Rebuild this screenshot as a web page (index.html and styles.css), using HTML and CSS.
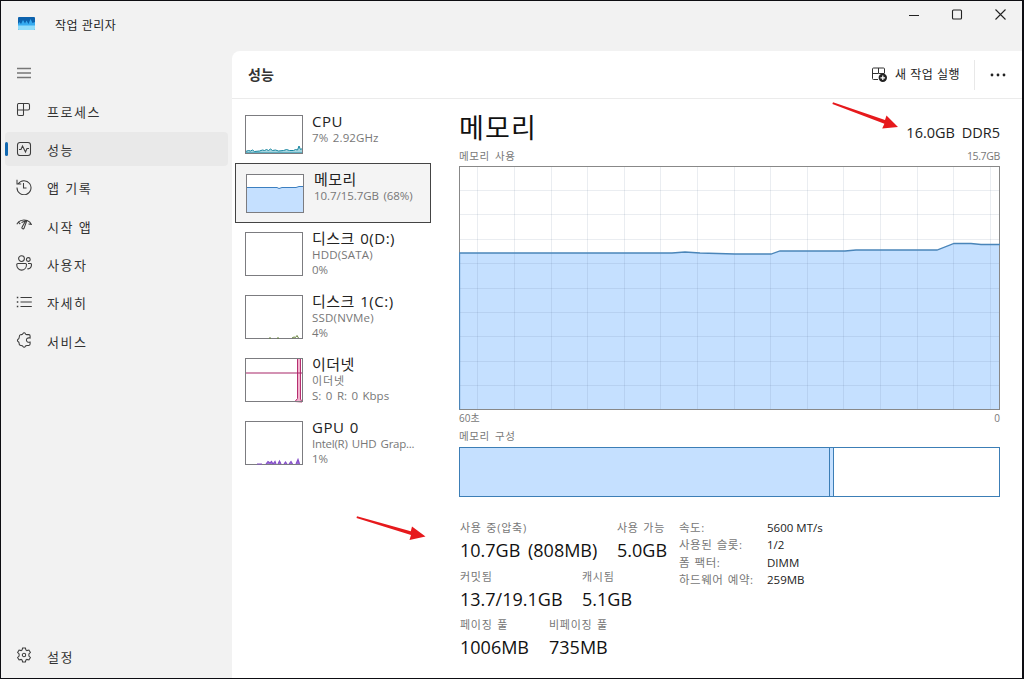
FILE: index.html
```html
<!DOCTYPE html>
<html lang="ko">
<head>
<meta charset="utf-8">
<title>작업 관리자</title>
<link rel="stylesheet" href="styles.css">
</head>
<body>
<div class="window">
  <header class="titlebar">
    <svg class="app-icon" width="17" height="14" viewBox="0 0 17 14"><rect width="17" height="13" rx="1" fill="#0c62ad"/><path d="M0 7l1.500-2 1.500 2 2-4 2 3.500 1.500-3 2 3.500 2-5 2 4 2.500-1v7H0z" fill="#35aaf0"/><path d="M0 8.500h17V12a1 1 0 0 1-1 1H1a1 1 0 0 1-1-1z" fill="#8fdcfb"/></svg>
    <span class="app-name">작업 관리자</span>
    <svg class="controls" width="110" height="28" viewBox="0 0 110 28" fill="none" stroke="#222" stroke-width="1.1"><path d="M9 14.500h10M95.500 8.500l10 10M105.500 8.500l-10 10"/><rect x="52.500" y="9" width="9" height="9" rx="1"/></svg>
  </header>
  <div class="body">
    <nav class="sidebar">
      <div class="nav-item menu"><svg viewBox="0 0 16 16"><path d="M1 3.500h14M1 8h14M1 12.500h14" stroke="#777" stroke-width="1.300"/></svg></div>
      <div class="nav-item"><svg viewBox="0 0 16 16"><path d="M2.500 1.500h9.500a1.500 1.500 0 0 1 1.500 1.500v3.500a1.500 1.500 0 0 1-1.500 1.500H1.500V3a1.500 1.500 0 0 1 1-1.500zM1.500 8v4a1.500 1.500 0 0 0 1.500 1.500h3.500a1 1 0 0 0 1-1V1.500"/></svg><span>프로세스</span></div>
      <div class="nav-item active"><svg viewBox="0 0 16 16"><rect x="1.500" y="1.500" width="13" height="13" rx="2.500"/><path d="M3 8.500h2l1.500-3.500 3 6 1.500-3.500h2"/></svg><span>성능</span></div>
      <div class="nav-item"><svg viewBox="0 0 16 16"><path d="M2.200 4.800A7 7 0 1 1 1 8.600M1 .8v4.200h4.200M7.500 4v5h3"/></svg><span>앱 기록</span></div>
      <div class="nav-item"><svg viewBox="0 0 16 16"><path d="M.8 7.300l1.500-2.100 2 1.800M2.300 5.200C5 2.300 10.500 2 13.800 5.200l1.500 2.100-2.800-.3M9.700 3.800L6 10.200c-.5 1.800 1.800 2.300 2.200.7L10.700 4M5.500 5.500l4-1.500"/></svg><span>시작 앱</span></div>
      <div class="nav-item"><svg viewBox="0 0 16 16"><circle cx="5.500" cy="3.600" r="2.900"/><circle cx="12.300" cy="4.500" r="1.900"/><path d="M2 8.500h7.500a1 1 0 0 1 1 1c0 7.500-9.800 7.500-9.800 0 0-.6.600-1 1.300-1zM12 8.500h2.500a1 1 0 0 1 1 1c0 2.800-1.700 4.800-4.200 4.300"/></svg><span>사용자</span></div>
      <div class="nav-item"><svg viewBox="0 0 16 16"><path d="M4.500 3.500h11.300M4.500 8h11.300M4.500 12.500h11.300"/><path d="M.8 3.500h1.500M.8 8h1.500M.8 12.500h1.500" stroke-width="1.700"/></svg><span>자세히</span></div>
      <div class="nav-item"><svg viewBox="0 0 16 16"><path d="M5 2.600c1.100.2 1.700-.2 2-1.200.5-.9 1.900-.9 2.200 0 .3 1 .9 1.400 2 1.200h1.700c.8 0 1.200.6 1.200 1.300v2.200c-2.400-.7-3.700.6-3.700 2s1.300 2.700 3.700 2v2c0 .8-.5 1.300-1.300 1.300h-1.600c-1 0-1.700.3-2 1.100-.4.900-1.700.9-2.200 0-.4-.8-1-1.100-2-1.100-1.300 0-1.800-.6-1.800-1.700 0-1.200-.3-1.800-1.100-2.200-.9-.5-.9-1.600 0-2.200.8-.4 1.100-1 1.100-2.100 0-1.500.500-2.400 1.800-2.600z"/></svg><span>서비스</span></div>
      <div class="nav-item settings"><svg viewBox="0 0 16 16"><path d="M6.600 1h2.800l.5 2 1 .6 2-.6 1.500 2.500-1.500 1.500v2l1.500 1.500-1.500 2.500-2-.6-1 .6-.5 2H6.600l-.5-2-1-.6-2 .6-1.500-2.500L3.100 9V7L1.600 5.500 3.100 3l2 .6 1-.6z"/><circle cx="8" cy="8" r="1.700"/></svg><span>설정</span></div>
    </nav>
    <main class="panel">
      <div class="toolbar">
        <h1>성능</h1>
        <svg width="16" height="16" viewBox="0 0 16 16" fill="none" stroke="#333"><path d="M12.500 6V2a1 1 0 0 0-1-1H1.500a1 1 0 0 0-1 1v9.500a1 1 0 0 0 1 1H6M.5 6.500H6M6.500 1v5.500h6"/><circle cx="10.800" cy="10.800" r="4.200" fill="#222" stroke="none"/><path d="M10.800 8.500v4.600M8.500 10.800h4.600" stroke="#fff" stroke-width="1.200"/></svg>
        <span class="run">새 작업 실행</span>
        <span class="divider"></span>
        <svg width="16" height="4" viewBox="0 0 16 4" fill="#222"><circle cx="2" cy="2" r="1.400"/><circle cx="8" cy="2" r="1.400"/><circle cx="14" cy="2" r="1.400"/></svg>
      </div>
      <div class="content">
        <section class="devices">
          <div class="device short cpu">
            <svg width="58" height="39" viewBox="0 0 58 39"><path d="M.5 36.500l3-1 2 .5 2-1 2 1.500 5-.5 3-1 2 .5 2-1 2 1 2-1.500 2 1.500 3-.5 3 1 5-.5 3-1 3 1h4l2-1 2 .5 1.500-4 1.500 3.500 2-1 1 1.500V38H.5z" fill="#a5d5df" stroke="#1886a0"/><rect class="frame" x=".5" y=".5" width="57" height="38"/></svg>
            <div class="info"><b>CPU</b><span class="w-cpu">7% 2.92GHz</span></div>
          </div>
          <div class="device short selected">
            <svg width="58" height="39" viewBox="0 0 58 39"><rect width="58" height="39" fill="#fff"/><path d="M.5 13.500H31l2 1 3-1h14l3-1h4.500V38.500H.5z" fill="#c5e0ff" stroke="#3c7fc0"/><rect class="frame" x=".5" y=".5" width="57" height="38"/></svg>
            <div class="info"><b>메모리</b><span class="w-mem">10.7/15.7GB (68%)</span></div>
          </div>
          <div class="device">
            <svg width="58" height="45" viewBox="0 0 58 45"><rect class="frame" x=".5" y=".5" width="57" height="43"/></svg>
            <div class="info"><b class="disk">디스크 0(D:)</b><span class="w-hdd">HDD(SATA)</span><span>0%</span></div>
          </div>
          <div class="device">
            <svg width="58" height="45" viewBox="0 0 58 45"><rect class="frame" x=".5" y=".5" width="57" height="43"/><path d="M24 43h2M32 43h2M47 43l2-1 1.500.5 1.500-2 1.500 2.500" fill="none" stroke="#65823a"/></svg>
            <div class="info"><b class="disk">디스크 1(C:)</b><span class="w-ssd">SSD(NVMe)</span><span>4%</span></div>
          </div>
          <div class="device">
            <svg width="58" height="45" viewBox="0 0 58 45"><path d="M50 43.500l2.500-3V.5h3V41l1.500 3z" fill="#f2b3ce" stroke="#b52f70"/><path d="M0 15h57" stroke="#a72768" stroke-width="1.200"/><rect class="frame" x=".5" y=".5" width="57" height="43"/></svg>
            <div class="info"><b>이더넷</b><span class="w-eth">이더넷</span><span class="w-net">S: 0 R: 0 Kbps</span></div>
          </div>
          <div class="device">
            <svg width="58" height="45" viewBox="0 0 58 45"><rect class="frame" x=".5" y=".5" width="57" height="43"/><path d="M12 43h5M21 43l2-2.500 2 1.500 1.500-1.500 1.500 2.500 2-2.500 1 2.500M33 43l1.500-3 1.500 3M39 43l1.500-2 1.500 2M44 43l2-2.500 1.500 2.500M51 43l2-4.500 1.500 4.500" fill="#9a70d8" stroke="#8650c8" stroke-width="1.200"/></svg>
            <div class="info"><b>GPU 0</b><span class="w-gpu">Intel(R) UHD Grap...</span><span>1%</span></div>
          </div>
        </section>
        <section class="detail">
          <div class="heading"><h2>메모리</h2><span class="capacity">16.0GB DDR5</span></div>
          <div class="caption"><span>메모리 사용</span><span class="scale">15.7GB</span></div>
          <svg class="chart" width="541" height="244" viewBox="0 0 541 244">
            <path d="M.5 87H213l13-1 15 1 35 1h36l9-3h65l11-1h81l17-6.500h17l10 1h19V244H.5z" fill="#c5e0ff"/>
            <path d="M18.500 0v244M55.500 0v244M92.500 0v244M128.500 0v244M165.500 0v244M201.500 0v244M238.500 0v244M275.500 0v244M311.500 0v244M348.500 0v244M384.500 0v244M421.500 0v244M458.500 0v244M494.500 0v244M531.500 0v244M0 24.500h541M0 48.500h541M0 73.500h541M0 97.500h541M0 122.500h541M0 146.500h541M0 170.500h541M0 195.500h541M0 219.500h541" stroke="#506a88" stroke-opacity=".12"/>
            <rect x=".5" y=".5" width="540" height="243" fill="none" stroke="#888"/>
            <path d="M.5 243.500V87H213l13-1 15 1 35 1h36l9-3h65l11-1h81l17-6.500h17l10 1h19" fill="none" stroke="#4a85b9" stroke-width="1.300"/>
          </svg>
          <div class="axis"><span>60초</span><span>0</span></div>
          <div class="comp-label">메모리 구성</div>
          <div class="composition"><div class="in-use"></div><div class="modified"></div></div>
          <div class="stats">
            <div class="left">
              <div class="row"><div class="stat s1"><label>사용 중(압축)</label><strong>10.7GB (808MB)</strong></div><div class="stat"><label>사용 가능</label><strong>5.0GB</strong></div></div>
              <div class="row"><div class="stat s2"><label>커밋됨</label><strong>13.7/19.1GB</strong></div><div class="stat"><label>캐시됨</label><strong>5.1GB</strong></div></div>
              <div class="row"><div class="stat s3"><label>페이징 풀</label><strong>1006MB</strong></div><div class="stat"><label>비페이징 풀</label><strong>735MB</strong></div></div>
            </div>
            <dl class="specs"><dt>속도:</dt><dd>5600 MT/s</dd><dt>사용된 슬롯:</dt><dd>1/2</dd><dt>폼 팩터:</dt><dd>DIMM</dd><dt>하드웨어 예약:</dt><dd>259MB</dd></dl>
          </div>
        </section>
      </div>
    </main>
  </div>
  <svg class="annotations" width="1024" height="679" viewBox="0 0 1024 679" fill="#e6191c"><path d="M833 102.200l-.6 1.800 52 19.800-2.200 4.700 15.800-1.500-11.500-11.500-1.500 4.500z"/><path d="M357 516.200l-.5 1.800 54.500 17-1.500 5 16-3.500-13.500-10-1.200 4.800z"/></svg>
</div>
</body>
</html>
```
FILE: styles.css
```css
* { box-sizing: border-box; }
body { margin: 0; background: #0d0d12; font-family: "Open Sans", "Noto Sans CJK KR", sans-serif; color: #222; }
h1, h2, dl, dd { margin: 0; }
svg { display: block; flex: none; }
span, b, label, strong, h1, h2, dt, dd { white-space: nowrap; }
.window { position: relative; width: 1024px; height: 679px; border: 1px solid #0d0d12; border-right-width: 2px; background: #f2f2f2; overflow: hidden; }
.titlebar { height: 50px; display: flex; align-items: flex-start; padding-left: 17px; }
.app-icon { margin-top: 16px; }
.app-name { margin: 14px 0 0 20px; font-size: 12px; line-height: 21px; letter-spacing: .5px; }
.controls { margin-left: auto; margin-right: 12px; }
.body { display: flex; height: 627px; }
.sidebar { width: 231px; display: flex; flex-direction: column; padding: 4px 4px 3px; }
.nav-item { height: 34px; margin-bottom: 4.300px; display: flex; align-items: center; padding-left: 11px; border-radius: 4px; font-size: 13px; line-height: 20px; flex: none; position: relative; color: #333; }
.nav-item svg { width: 16px; height: 16px; fill: none; stroke: #3c3c3c; stroke-width: 1.050; }
.nav-item span { margin-left: 15px; padding-top: 3px; letter-spacing: 1.500px; }
.menu svg { margin-top: 1px; }
.active { background: #e9e9e9; }
.active::before { content: ""; position: absolute; left: 0; top: 10px; width: 3px; height: 14px; border-radius: 2px; background: #1067b0; }
.settings { margin-top: auto; margin-bottom: 3px; }
.panel { flex: 1; background: #fff; border-top-left-radius: 8px; }
.toolbar { height: 48px; border-bottom: 1px solid #ebebeb; display: flex; align-items: center; padding: 0 16px 0 16px; }
h1 { font-size: 14px; line-height: 20px; font-weight: 700; margin-right: auto; color: #333; }
.run { font-size: 12px; line-height: 20px; height: 20px; margin-left: 7px; letter-spacing: .5px; }
.divider { width: 1px; height: 30px; background: #e8e8e8; margin: 0 15px 0 14px; }
.content { display: flex; }
.devices { width: 227px; padding: 7px 0 0 3px; }
.device { width: 196px; height: 63px; display: flex; padding: 9px 0 0 10px; }
.device.short { height: 60px; }
.device.cpu { height: 57px; }
.device.selected { height: 60px; border: 1px solid #444; background: #f4f4f4; padding-top: 10px; }
.device.selected .info { margin-top: -5px; margin-left: 10px; }
.frame { fill: none; stroke: #7c7c80; }
.info { margin: -4px 0 0 9px; display: flex; flex-direction: column; }
.info b { font-size: 15px; line-height: 20px; height: 19px; font-weight: 400; letter-spacing: .2px; word-spacing: 1px; }
.info b:not(.disk) { letter-spacing: .5px; }
.info .disk { letter-spacing: .5px; }
.info span { font-size: 11.500px; line-height: 15px; height: 14.500px; color: #777; word-spacing: 1.500px; }
.info .w-cpu { letter-spacing: .1px; }
.info .w-mem { letter-spacing: -.05px; }
.info .w-hdd { letter-spacing: .2px; }
.info .w-ssd { letter-spacing: .2px; }
.info .w-eth { font-size: 11px; letter-spacing: .9px; }
.info .w-gpu { letter-spacing: -.25px; }
.detail { width: 541px; padding-top: 10px; }
.heading { height: 39px; display: flex; justify-content: space-between; }
h2 { font-size: 27px; line-height: 38px; font-weight: 400; color: #111; letter-spacing: 1.200px; }
.capacity { font-size: 14.500px; line-height: 20px; margin-top: 14px; word-spacing: 3px; }
.caption { height: 18px; display: flex; justify-content: space-between; font-size: 10.500px; line-height: 16px; color: #777; word-spacing: 2px; letter-spacing: .6px; }
.scale { letter-spacing: -.35px; }
.axis { height: 16px; display: flex; justify-content: space-between; font-size: 10px; line-height: 16px; color: #777; }
.comp-label { height: 21px; font-size: 10.500px; line-height: 20px; color: #777; word-spacing: 2px; letter-spacing: .6px; }
.composition { height: 50px; border: 1px solid #3c7eb6; display: flex; }
.in-use { width: 370px; background: #c5e0ff; border-right: 1px solid #3c7eb6; }
.modified { width: 4px; background: #c5e0ff; border-right: 1px solid #3c7eb6; }
.stats { display: flex; margin-top: 20px; }
.left { width: 220px; padding-left: 1px; }
.row { display: flex; height: 48.700px; }
.stat { display: flex; flex-direction: column; }
.s1 { width: 157px; } .s2 { width: 122px; } .s3 { width: 89px; }
label { font-size: 11px; line-height: 21px; height: 20px; color: #777; letter-spacing: .75px; word-spacing: 1px; }
strong { font-size: 18px; line-height: 26px; height: 27px; font-weight: 400; color: #111; word-spacing: 3px; }
.specs { display: grid; grid-template-columns: 88px auto; grid-auto-rows: 17.300px; align-content: start; padding-top: 1px; font-size: 11.500px; line-height: 19px; }
dt { color: #777; letter-spacing: .5px; word-spacing: 1px; }
.annotations { position: absolute; left: -1px; top: -1px; pointer-events: none; }
```
